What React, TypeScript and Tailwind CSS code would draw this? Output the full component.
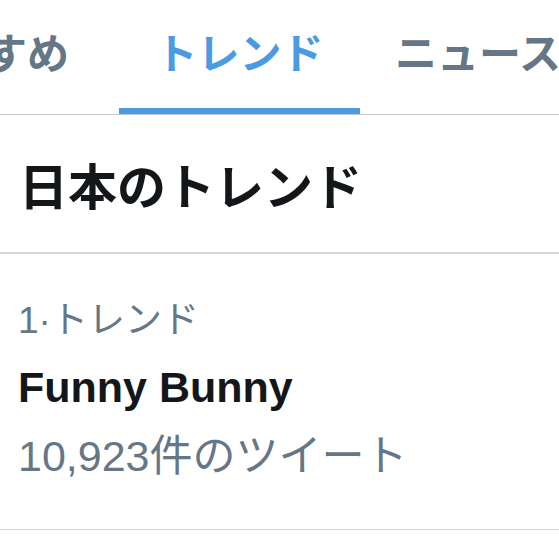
const jp = "font-['Noto_Sans_CJK_JP',sans-serif]";
const latin = "font-['Liberation_Sans','Noto_Sans_CJK_JP',sans-serif]";

function Tabs() {
  return (
    <div className={`flex h-[115px] border-b border-[#c6c6ca] overflow-hidden ${jp} text-[42px] font-bold leading-none`}>
      <div className="shrink-0 ml-[-99px] w-[218px] flex items-center pb-[12px] text-[#657786] whitespace-nowrap">
        おすすめ
      </div>
      <div className="shrink-0 w-[241px] flex items-center justify-center pb-[6px] border-b-[6px] border-[#4b9be2] text-[#4b9be2] whitespace-nowrap">
        トレンド
      </div>
      <div className="shrink-0 ml-[35px] flex items-center pb-[12px] text-[#657786] whitespace-nowrap">
        ニュース
      </div>
    </div>
  );
}

function Trend({ rank, name, count }: { rank: number; name: string; count: string }) {
  return (
    <div className="px-[18px] pt-[43px] pb-[46px] border-b border-[#d3d3d8]">
      <div className={`${latin} text-[37px] leading-[48px] text-[#657786]`}>{rank}·トレンド</div>
      <div className={`${latin} text-[43px] leading-[84px] font-bold text-[#14171a]`}>{name}</div>
      <div className={`${latin} text-[43px] leading-[54px] text-[#657786]`}>{count}件のツイート</div>
    </div>
  );
}

export default function App() {
  return (
    <div className="w-[559px] h-[560px] bg-white overflow-hidden">
      <Tabs />
      <div className={`h-[139px] flex items-center px-[19px] border-b-2 border-[#d3d3d8] ${jp} text-[49px] font-bold text-[#14171a] leading-none`}>
        日本のトレンド
      </div>
      <Trend rank={1} name="Funny Bunny" count="10,923" />
    </div>
  );
}
